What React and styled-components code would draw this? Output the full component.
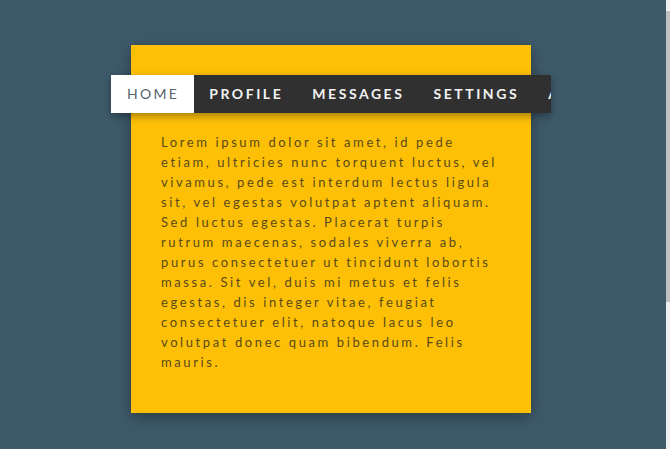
import styled, { createGlobalStyle } from "styled-components";

const GlobalStyle = createGlobalStyle`
  html, body {
    margin: 0;
    padding: 0;
    background: #3e5a6a;
    overflow: hidden;
  }
  body {
    font-family: Lato, "Open Sans", sans-serif;
  }
`;

const Page = styled.div`
  display: flex;
  justify-content: center;
  padding: 45px 0 0 0;
  height: 449px;
  box-sizing: border-box;
`;

const ScrollTrack = styled.div`
  position: fixed;
  top: 0;
  right: 0;
  width: 4px;
  height: 100%;
  background: #f1f1f1;
`;

const ScrollThumb = styled.div`
  margin-top: 11px;
  height: 291px;
  background: #c1c1c1;
`;

const Card = styled.div`
  width: 400px;
  height: 368px;
  margin-right: 8px;
  background: #fdc006;
  box-shadow: 0 4px 14px rgba(0, 0, 0, 0.35);
  padding: 30px 0 40px;
  box-sizing: border-box;
`;

const NavBar = styled.ul`
  display: flex;
  margin: 0 -20px;
  padding: 0;
  height: 38px;
  background: #303030;
  overflow: hidden;
  list-style: none;
  box-shadow: 0 3px 8px rgba(0, 0, 0, 0.35);
`;

const NavItem = styled.li`
  flex-shrink: 0;
  display: flex;
  align-items: center;
  padding: ${(p) => (p.$active ? "0 15px 2px 16px" : "0 14px 2px 15px")};
  font-size: 14px;
  font-weight: ${(p) => (p.$active ? 400 : 700)};
  letter-spacing: ${(p) => (p.$active ? "2.3px" : "2.55px")};
  color: ${(p) => (p.$active ? "#56646e" : "#f2f2f2")};
  background: ${(p) => (p.$active ? "#ffffff" : "transparent")};
  cursor: pointer;
`;

const Text = styled.p`
  margin: 19px 28px 0 30px;
  font-size: 13px;
  line-height: 20px;
  letter-spacing: 2.6px;
  color: #5a4a18;
`;

const items = ["HOME", "PROFILE", "MESSAGES", "SETTINGS", "ABOUT"];

export default function App() {
  return (
    <>
      <GlobalStyle />
      <Page>
        <Card>
          <NavBar>
            {items.map((it, i) => (
              <NavItem key={it} $active={i === 0}>
                {it}
              </NavItem>
            ))}
          </NavBar>
          <Text>
            Lorem ipsum dolor sit amet, id pede etiam, ultricies nunc torquent
            luctus, vel vivamus, pede est interdum lectus ligula sit, vel
            egestas volutpat aptent aliquam. Sed luctus egestas. Placerat
            turpis rutrum maecenas, sodales viverra ab, purus consectetuer ut
            tincidunt lobortis massa. Sit vel, duis mi metus et felis egestas,
            dis integer vitae, feugiat consectetuer elit, natoque lacus leo
            volutpat donec quam bibendum. Felis mauris.
          </Text>
        </Card>
      </Page>
      <ScrollTrack>
        <ScrollThumb />
      </ScrollTrack>
    </>
  );
}
